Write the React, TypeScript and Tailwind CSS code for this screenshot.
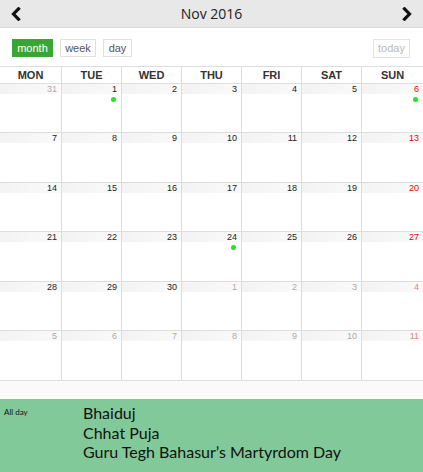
import React from "react";

type Cell = { d: number; other?: boolean; dot?: boolean };

const rows: Cell[][] = (() => {
  const cells: Cell[] = [{ d: 31, other: true }];
  for (let i = 1; i <= 30; i++) cells.push({ d: i, dot: i === 1 || i === 6 || i === 24 });
  for (let i = 1; i <= 11; i++) cells.push({ d: i, other: true });
  const r: Cell[][] = [];
  for (let i = 0; i < 6; i++) r.push(cells.slice(i * 7, i * 7 + 7));
  return r;
})();

const days = ["MON", "TUE", "WED", "THU", "FRI", "SAT", "SUN"];
const rowH = ["h-[49px]", "h-[50px]", "h-[49px]", "h-[50px]", "h-[49px]", "h-[50px]"];

function Chevron({ dir }: { dir: "l" | "r" }) {
  return (
    <svg width="12" height="14" viewBox="0 0 12 14">
      {dir === "l" ? (
        <polyline points="8.5,1.8 3.5,7 8.5,12.2" fill="none" stroke="#111" strokeWidth="3.2" strokeLinecap="square" />
      ) : (
        <polyline points="3.5,1.8 8.5,7 3.5,12.2" fill="none" stroke="#111" strokeWidth="3.2" strokeLinecap="square" />
      )}
    </svg>
  );
}

export default function App() {
  return (
    <div className="w-[423px] h-[472px] bg-white overflow-hidden flex flex-col" style={{ fontFamily: '"Liberation Sans", Arial, sans-serif' }}>
      <div className="h-[28px] bg-[#e8e8e8] border-b border-[#d8d8d8] flex items-center justify-between px-[10px]">
        <Chevron dir="l" />
        <div className="text-[14px] text-[#222]" style={{ fontFamily: '"Open Sans", sans-serif' }}>Nov 2016</div>
        <Chevron dir="r" />
      </div>
      <div className="h-[38px] flex items-start pt-[11px] px-[12px]">
        <div className="flex gap-[7px]">
          <div className="h-[18px] w-[41px] bg-[#3aa535] text-white text-[11px] flex items-center justify-center">month</div>
          <div className="h-[18px] w-[36px] border border-[#e0e0e0] text-[#555] text-[11px] flex items-center justify-center">week</div>
          <div className="h-[18px] w-[29px] border border-[#e0e0e0] text-[#555] text-[11px] flex items-center justify-center">day</div>
        </div>
        <div className="ml-auto mr-[1px] h-[19px] w-[37px] border border-[#e3e3e3] text-[#bbb] text-[11px] flex items-center justify-center">today</div>
      </div>
      <div className="grid grid-cols-[62px_60px_60px_60px_60px_60px_1fr] border-t border-[#ddd] h-[17px]">
        {days.map((d, i) => (
          <div key={d} className={`flex items-center justify-center text-[11px] font-bold text-[#333] ${i < 6 ? "border-r border-[#ddd]" : ""}`}>
            {d}
          </div>
        ))}
      </div>
      {rows.map((row, ri) => (
        <div key={ri} className={`grid grid-cols-[62px_60px_60px_60px_60px_60px_1fr] border-t border-[#ddd] ${rowH[ri]}`}>
          {row.map((c, ci) => (
            <div key={ci} className={`flex flex-col ${ci < 6 ? "border-r border-[#ddd]" : ""}`}>
              <div className="h-[10px] bg-gradient-to-r from-[#f3f3f3] to-[#fafafa] flex justify-end pr-[4px]">
                <span
                  className={`text-[9px] leading-[11px] ${
                    c.other ? (ci === 6 ? "text-[#f08080]" : "text-[#aaa]") : ci === 6 ? "text-[#e00]" : "text-[#222]"
                  }`}
                >
                  {c.d}
                </span>
              </div>
              {c.dot && (
                <div className="flex justify-end pr-[5px] pt-[3px]">
                  <div className="w-[5px] h-[5px] rounded-full bg-[#1ee81e]" />
                </div>
              )}
            </div>
          ))}
        </div>
      ))}
      <div className="h-[19px] border-t border-[#ddd] bg-[#fafafa]" />
      <div className="flex-1 bg-[#82c99a] flex pt-[4px]" style={{ fontFamily: "Lato, sans-serif" }}>
        <div className="w-[83px] pl-[4px] pt-[3px] text-[8px] text-[#111]">All day</div>
        <div className="text-[16px] leading-[19.5px] text-[#111]">
          <div>Bhaiduj</div>
          <div>Chhat Puja</div>
          <div>Guru Tegh Bahasur’s Martyrdom Day</div>
        </div>
      </div>
    </div>
  );
}
